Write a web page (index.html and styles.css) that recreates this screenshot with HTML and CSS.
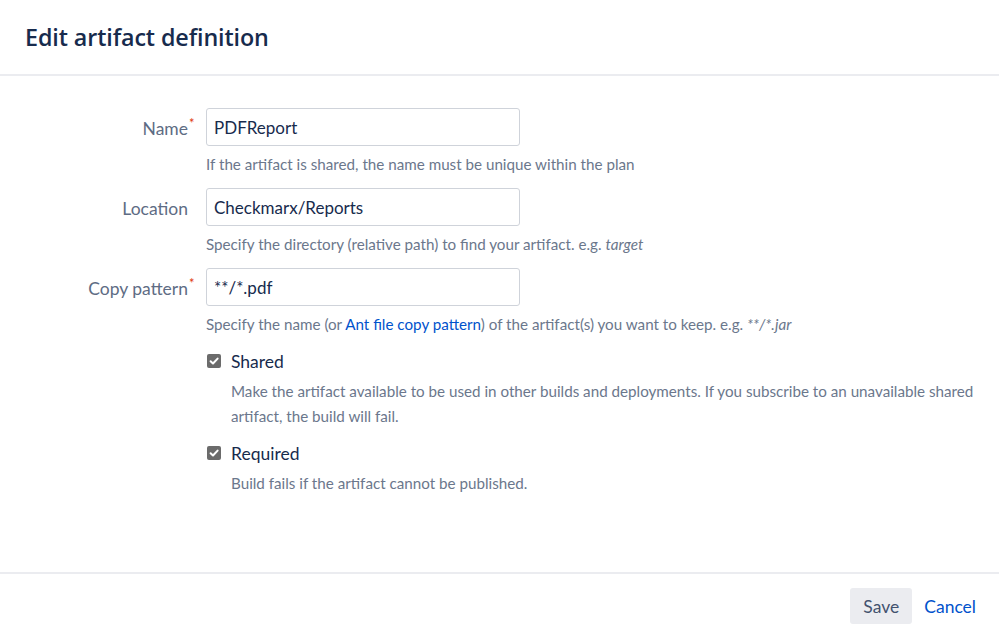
FILE: index.html
```html
<!DOCTYPE html>
<html lang="en">
<head>
<meta charset="utf-8">
<title>Edit artifact definition</title>
<link rel="stylesheet" href="styles.css">
</head>
<body>
<div class="dialog">
  <header class="dialog-header">
    <h1 class="dialog-title">Edit artifact definition</h1>
  </header>
  <form class="dialog-body">
    <div class="field">
      <label class="field-label"><span class="label-text">Name<span class="req">*</span></span></label>
      <div class="field-control">
        <input class="text-input" type="text" value="PDFReport">
        <div class="description">If the artifact is shared, the name must be unique within the plan</div>
      </div>
    </div>
    <div class="field">
      <label class="field-label"><span class="label-text">Location</span></label>
      <div class="field-control">
        <input class="text-input" type="text" value="Checkmarx/Reports">
        <div class="description">Specify the directory (relative path) to find your artifact. e.g. <em>target</em></div>
      </div>
    </div>
    <div class="field">
      <label class="field-label"><span class="label-text">Copy pattern<span class="req">*</span></span></label>
      <div class="field-control">
        <input class="text-input" type="text" value="**/*.pdf">
        <div class="description">Specify the name (or <a class="link" href="#">Ant file copy pattern</a>) of the artifact(s) you want to keep. e.g. <em>**/*.jar</em></div>
      </div>
    </div>
    <div class="check-group">
      <div class="check">
        <div class="check-row">
          <span class="checkbox"><svg viewBox="0 0 14 14" width="14" height="14"><path d="M3.6 7.2 L6 9.5 L10.6 4.6" fill="none" stroke="#fff" stroke-width="2" stroke-linecap="round" stroke-linejoin="round"/></svg></span>
          <span class="check-label">Shared</span>
        </div>
        <div class="check-desc">Make the artifact available to be used in other builds and deployments. If you subscribe to an unavailable shared artifact, the build will fail.</div>
      </div>
      <div class="check">
        <div class="check-row">
          <span class="checkbox"><svg viewBox="0 0 14 14" width="14" height="14"><path d="M3.6 7.2 L6 9.5 L10.6 4.6" fill="none" stroke="#fff" stroke-width="2" stroke-linecap="round" stroke-linejoin="round"/></svg></span>
          <span class="check-label">Required</span>
        </div>
        <div class="check-desc">Build fails if the artifact cannot be published.</div>
      </div>
    </div>
  </form>
  <footer class="dialog-footer">
    <button class="btn btn-save" type="button">Save</button>
    <a class="btn-link" href="#">Cancel</a>
  </footer>
</div>
</body>
</html>
```
FILE: styles.css
```css
* { box-sizing: border-box; }
html, body { margin: 0; padding: 0; background: #fff; }
body {
  font-family: Lato, "Open Sans", "Noto Sans", sans-serif;
  color: #172b4d;
}
.dialog {
  width: 999px;
  height: 637px;
  display: flex;
  flex-direction: column;
}
.dialog-header {
  height: 76px;
  border-bottom: 2px solid #ebecf0;
  padding: 0 25px;
  display: flex;
  align-items: center;
}
.dialog-title {
  margin: 0;
  font-family: "Open Sans", Lato, sans-serif;
  font-size: 23.3px;
  font-weight: 600;
  color: #172b4d;
  letter-spacing: -0.1px;
}
.dialog-body {
  flex: 1;
  padding-top: 32px;
}
.field {
  display: flex;
  height: 80px;
}
.field-label {
  width: 188px;
  flex: none;
  text-align: right;
  font-size: 17.5px;
  color: #5e6c84;
  line-height: 38px;
  padding-top: 2px;
}
.label-text { position: relative; }
.req {
  position: absolute;
  left: 100%;
  top: -1px;
  margin-left: 1px;
  color: #de350b;
  font-size: 13px;
  line-height: 1;
}
.field-control {
  margin-left: 18px;
}
.text-input {
  display: block;
  width: 314px;
  height: 38px;
  border: 1px solid #cfd3da;
  border-radius: 3px;
  padding: 0 7px;
  font-family: inherit;
  font-size: 17px;
  color: #172b4d;
  background: #fff;
  outline: none;
}
.description {
  margin-top: 8px;
  font-size: 15.2px;
  line-height: 20px;
  color: #6b778c;
  white-space: nowrap;
}
.link { color: #0052cc; text-decoration: none; }
.check-group {
  margin-left: 207px;
  padding-top: 1px;
}
.check { margin-bottom: 12px; }
.check-row {
  display: flex;
  align-items: center;
  height: 24px;
}
.checkbox {
  width: 14px;
  height: 14px;
  border-radius: 2px;
  background: #6b6b6b;
  display: inline-flex;
  flex: none;
}
.checkbox svg { display: block; }
.check-label {
  margin-left: 10px;
  font-size: 17.5px;
  color: #172b4d;
}
.check-desc {
  margin-left: 24px;
  margin-top: 6px;
  font-size: 15.2px;
  line-height: 25px;
  color: #6b778c;
  padding-right: 18px;
}
.dialog-footer {
  height: 65px;
  border-top: 2px solid #ebecf0;
  display: flex;
  justify-content: flex-end;
  align-items: flex-start;
  padding: 14px 23px 0 0;
}
.btn {
  height: 36px;
  padding: 0 12px;
  border: none;
  border-radius: 3px;
  font-family: inherit;
  font-size: 17.5px;
  cursor: pointer;
}
.btn-save {
  background: #ebecf0;
  color: #42526e;
  width: 62px;
}
.btn-link {
  margin-left: 12px;
  line-height: 37px;
  font-size: 17.5px;
  color: #0052cc;
  text-decoration: none;
}
```
